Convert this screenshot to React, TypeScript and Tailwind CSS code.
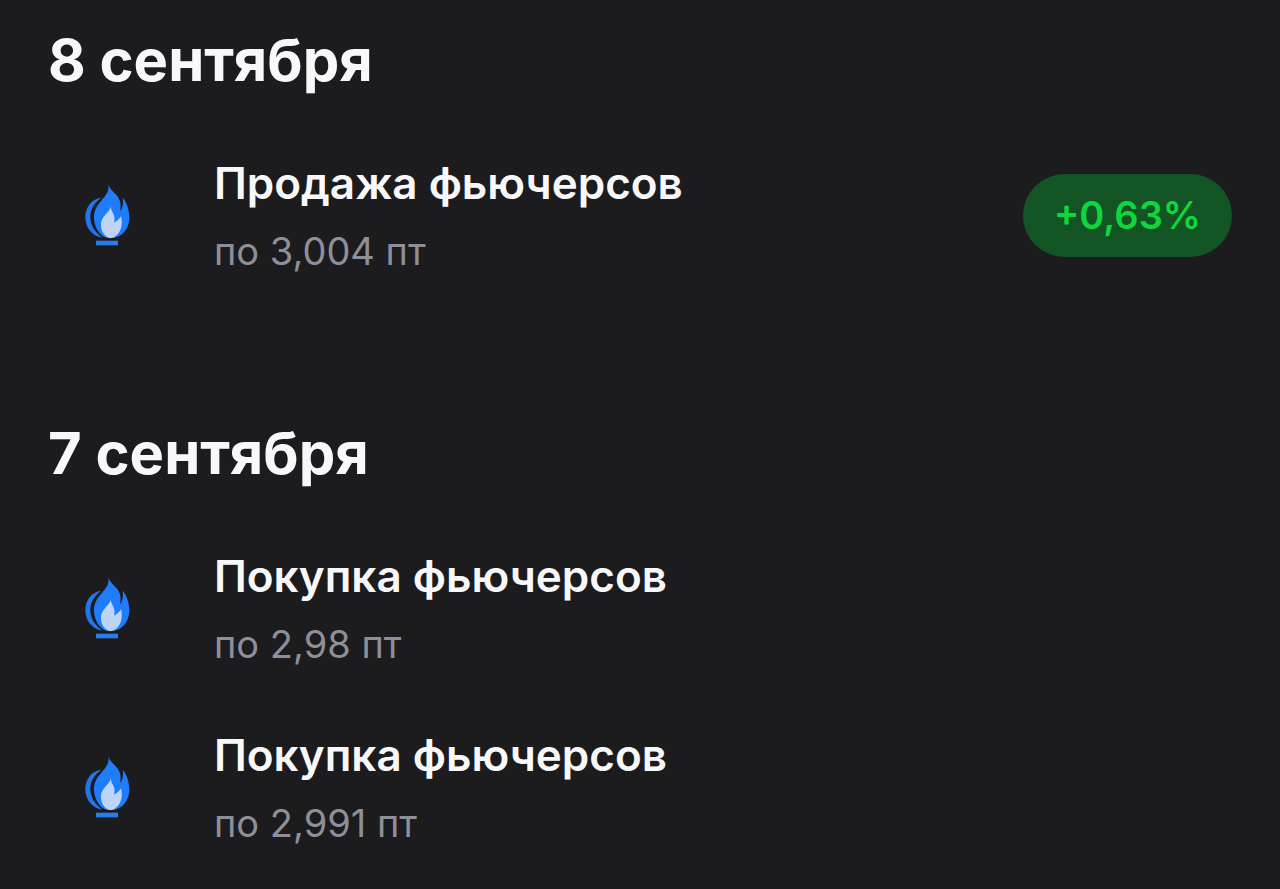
type Deal = {
  id: string;
  title: string;
  price: string;
  change?: string;
};

type Day = {
  date: string;
  deals: Deal[];
};

const days: Day[] = [
  {
    date: "8 сентября",
    deals: [{ id: "d1", title: "Продажа фьючерсов", price: "по 3,004 пт", change: "+0,63%" }],
  },
  {
    date: "7 сентября",
    deals: [
      { id: "d2", title: "Покупка фьючерсов", price: "по 2,98 пт" },
      { id: "d3", title: "Покупка фьючерсов", price: "по 2,991 пт" },
    ],
  },
];

function GasFlame() {
  return (
    <svg viewBox="0 2 225 240" className="h-20 w-[75px]" aria-hidden="true">
      {/* left tongue */}
      <path
        d="M94 67C64 70 46 97 46 125C46 156 65 182 97 187C75 170 61 150 61 124C61 99 76 81 94 67Z"
        fill="#2475e6"
      />
      {/* main flame */}
      <path
        d="M115 27C119 47 108 60 94 76C79 92 71 108 72 130C74 154 86 175 103 185C110 189 128 190 138 186C162 178 178 154 178 127C178 102 170 81 158 67C161 84 158 98 150 108C153 95 153 81 146 69C139 54 120 45 115 27Z"
        fill="#1f7cfb"
      />
      {/* inner flame */}
      <path
        d="M122 90C123 102 115 108 106 118C96 129 91 140 93 154C95 171 106 186 121 188C138 186 150 172 154 154C156 143 156 133 153 123C147 133 139 138 132 142C135 132 134 123 130 115C125 106 122 100 122 90Z"
        fill="#bfd5f7"
      />
      <rect x="78" y="196" width="66" height="14" fill="#2b7be9" />
    </svg>
  );
}

function DealRow({ deal }: { deal: Deal }) {
  return (
    <li className="flex h-[179px] items-center gap-12">
      <div className="flex w-[118px] shrink-0 justify-center">
        <GasFlame />
      </div>
      <div className="min-w-0 flex-1 pt-[2px]">
        <h3 className="text-[44px] leading-[68px] font-semibold text-[#f8f8fa]">{deal.title}</h3>
        <p className="text-[38px] leading-[68px] text-[#8e8f98]">{deal.price}</p>
      </div>
      {deal.change && (
        <span className="shrink-0 rounded-full bg-[#125424] px-[31px] py-4 text-[38px] leading-[51px] font-semibold text-[#0fd63c]">
          {deal.change}
        </span>
      )}
    </li>
  );
}

export default function App() {
  return (
    <main className="flex min-h-screen flex-col gap-[88px] bg-[#1c1c1e] px-12 font-['Inter',sans-serif]">
      {days.map((day) => (
        <section key={day.date}>
          <h2 className="pt-6 pb-[30px] text-[58px] leading-[72px] font-bold text-[#f8f8fa]">
            {day.date}
          </h2>
          <ul>
            {day.deals.map((deal) => (
              <DealRow key={deal.id} deal={deal} />
            ))}
          </ul>
        </section>
      ))}
    </main>
  );
}
